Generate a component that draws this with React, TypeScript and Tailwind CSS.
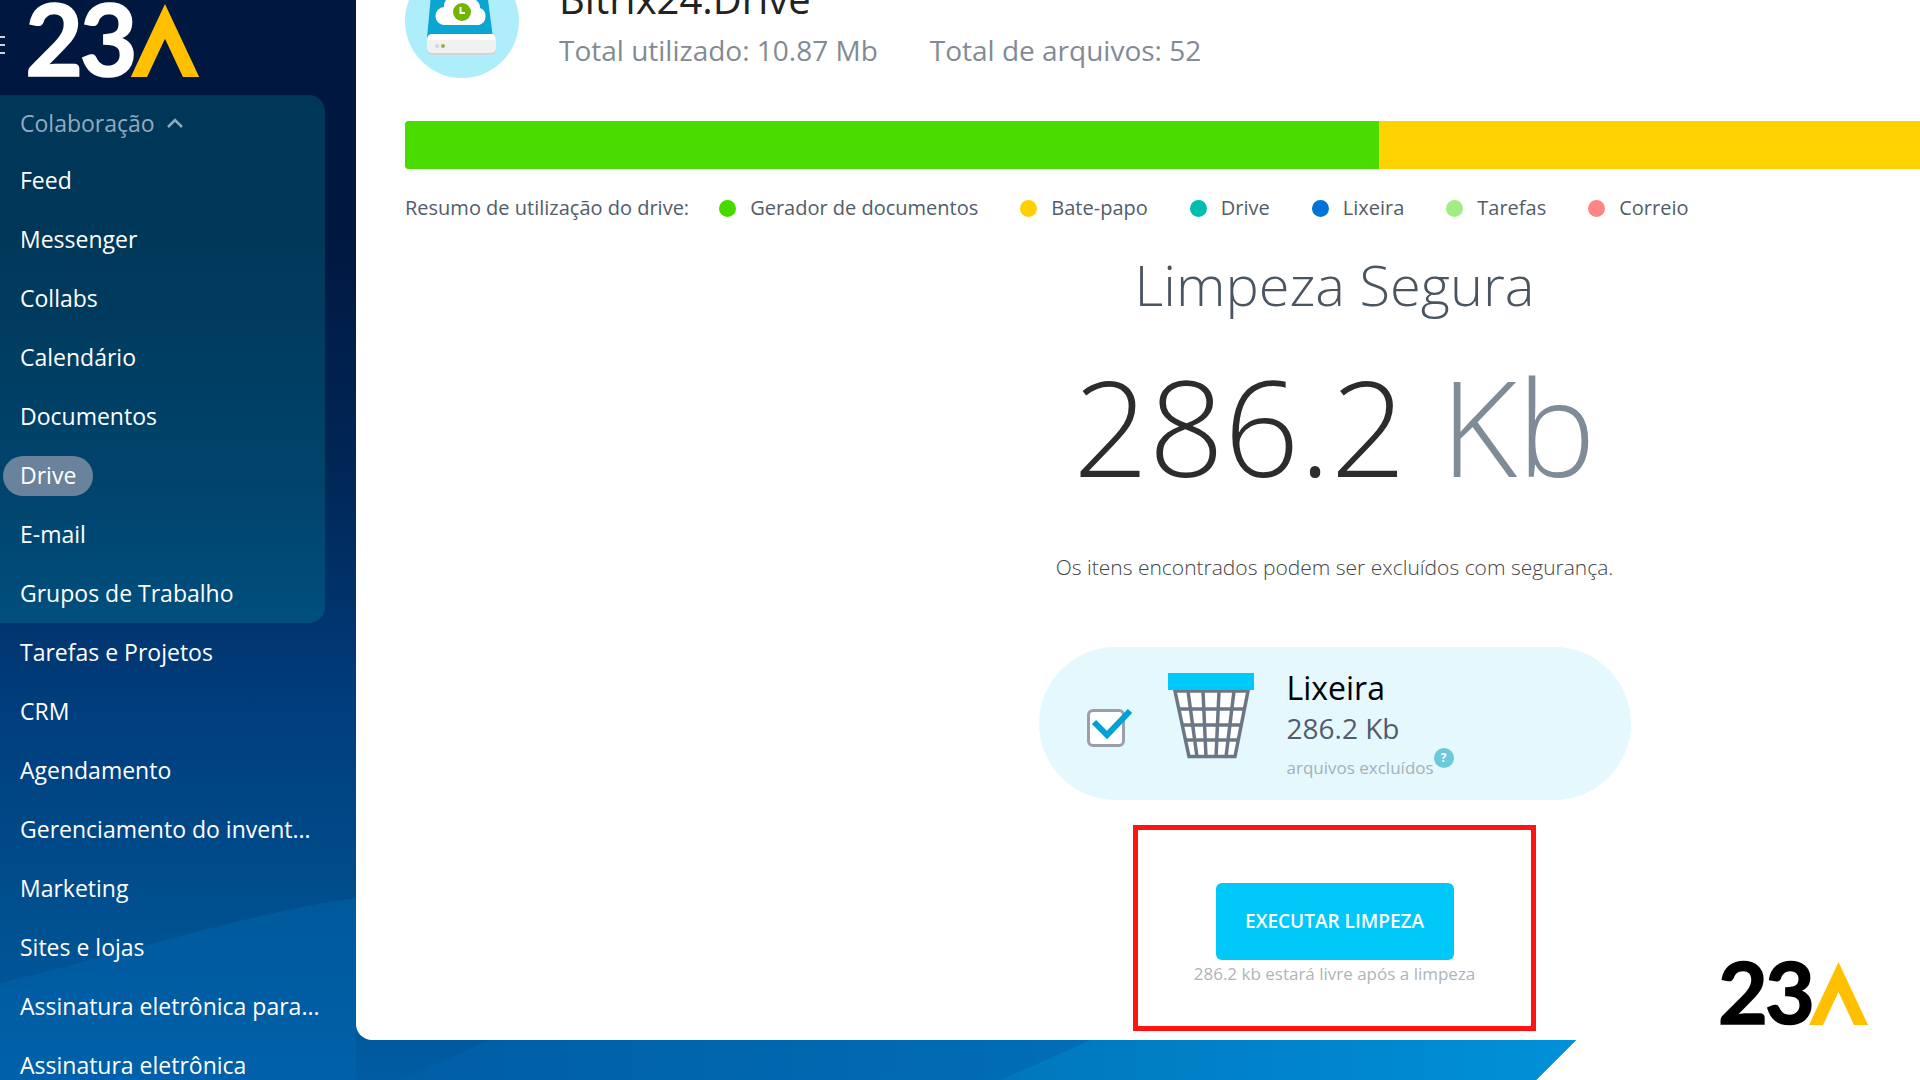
const collaboration = ["Feed", "Messenger", "Collabs", "Calendário", "Documentos", "Drive", "E-mail", "Grupos de Trabalho"];

const tools = [
  "Tarefas e Projetos",
  "CRM",
  "Agendamento",
  "Gerenciamento do invent...",
  "Marketing",
  "Sites e lojas",
  "Assinatura eletrônica para...",
  "Assinatura eletrônica",
];

const legend = [
  { label: "Gerador de documentos", color: "bg-[#47d900]" },
  { label: "Bate-papo", color: "bg-[#ffd000]" },
  { label: "Drive", color: "bg-[#00bdb3]" },
  { label: "Lixeira", color: "bg-[#0073d6]" },
  { label: "Tarefas", color: "bg-[#a3ee83]" },
  { label: "Correio", color: "bg-[#ff8484]" },
];

function Logo({ className }: { className: string }) {
  return (
    <svg viewBox="0 0 147 63" className={`overflow-visible ${className}`} role="img" aria-label="23A">
      <text
        x="-3 44"
        y="62"
        fontSize="86"
        fontWeight="700"
        fontFamily="Lato, sans-serif"
        fill="currentColor"
        stroke="currentColor"
        strokeWidth="1.5"
      >
        23
      </text>
      <path d="M117.500 0L147 63H133L117.500 30L102 63H88Z" fill="#ffc000" />
    </svg>
  );
}

function DriveIcon() {
  return (
    <svg viewBox="0 0 114 114" className="size-[114px] shrink-0" aria-hidden="true">
      <circle cx="57" cy="57" r="57" fill="#aeeefb" />
      <path d="M27 20H81L88 74H22Z" fill="#0aa5d1" />
      <path d="M40 61a9 9 0 0 1-1-18a9 9 0 0 1 8-10a14 14 0 0 1 24 3a10 10 0 0 1 4 8a9 9 0 0 1-1 17Z" fill="#fff" />
      <circle cx="57" cy="48" r="9" fill="#72b500" />
      <path d="M55.500 43V49H60" fill="none" stroke="#fff" strokeWidth="2" />
      <rect x="22" y="72" width="69" height="19" rx="5" fill="#cfd5da" />
      <rect x="22" y="70" width="69" height="19" rx="5" fill="#f1f1f2" />
      <path d="M27 70H86a5 5 0 0 1 4 6H23a5 5 0 0 1 4-6Z" fill="#fff" />
      <circle cx="32" cy="82" r="2" fill="#d8d4d4" />
      <circle cx="38" cy="82" r="2" fill="#8fb34f" />
    </svg>
  );
}

function BasketIcon() {
  return (
    <svg viewBox="0 0 86 86" className="size-[86px] shrink-0" aria-hidden="true">
      <path d="M7 18H80L68 84H20Z" fill="#fff" />
      <g fill="none" stroke="#6b7785" strokeWidth="3.500">
        <path d="M7 18H80L67 83.500H21Z" />
        <path d="M20 18L29 84M35 18L38 84M51 18L48 84M66 18L58 84M10 36H77M13 52H74M16 67H71" />
      </g>
      <path d="M0 0H86V17H0Z" fill="#00c8f8" />
    </svg>
  );
}

function Sidebar() {
  return (
    <aside className="w-[356px] shrink-0 text-[23px] text-white">
      <div className="flex h-[95px] items-start gap-[23px] pt-1">
        <button aria-label="Menu" className="mt-8 flex w-[5px] flex-col gap-1.5">
          <span className="h-0.5 bg-white/80" />
          <span className="h-0.5 bg-white/80" />
          <span className="h-0.5 bg-white/80" />
        </button>
        <Logo className="h-[73px] w-[172px]" />
      </div>
      <nav>
        <div className="mr-[31px] rounded-r-2xl bg-[#00b5ba]/20">
          <button className="flex h-14 items-center gap-3 px-5 text-[#93a9c0]">
            Colaboração
            <svg viewBox="0 0 16 10" className="h-2.5 w-4" aria-hidden="true">
              <path d="M1 9L8 2L15 9" fill="none" stroke="currentColor" strokeWidth="2.500" />
            </svg>
          </button>
          <ul>
            {collaboration.map((item) => (
              <li key={item} className="flex h-[59px] items-center pl-[3px]">
                <a
                  href="#"
                  aria-current={item === "Drive" ? "page" : undefined}
                  className="flex h-10 items-center rounded-full px-[17px] aria-[current=page]:bg-[#6a829c]"
                >
                  {item}
                </a>
              </li>
            ))}
          </ul>
        </div>
        <ul>
          {tools.map((item) => (
            <li key={item} className="flex h-[59px] items-center px-5">
              <a href="#" className="whitespace-nowrap">{item}</a>
            </li>
          ))}
        </ul>
      </nav>
    </aside>
  );
}

function Cleanup() {
  return (
    <section className="flex flex-col items-center">
      <h2 className="mt-6 text-[56px] leading-[76px] font-light text-[#4a5560]">Limpeza Segura</h2>
      <p className="mt-3 text-[132px] leading-[184px] font-light whitespace-nowrap text-[#2c2c2c]">
        286.2 <span className="text-[#7f8b97]">Kb</span>
      </p>
      <p className="mt-[33px] text-[21px] leading-8 font-light text-[#444]">
        Os itens encontrados podem ser excluídos com segurança.
      </p>
      <label className="mt-16 flex h-[153px] w-[592px] items-center rounded-full bg-[#e5f8fe] pl-12">
        <span className="relative mt-2 size-[38px] shrink-0">
          <input
            type="checkbox"
            defaultChecked
            className="peer size-[38px] appearance-none rounded-md border-[3px] border-[#9a9fab] bg-white"
          />
          <svg viewBox="0 0 42 32" className="absolute top-0 left-1 hidden h-8 w-[42px] peer-checked:block" aria-hidden="true">
            <path d="M3 13L16 26L39 2" fill="none" stroke="#00a2d6" strokeWidth="6" />
          </svg>
        </span>
        <span className="mr-[33px] ml-[43px] -mt-4">
          <BasketIcon />
        </span>
        <span className="mt-2 flex flex-col">
          <span className="text-[32px] leading-10 text-black">Lixeira</span>
          <span className="text-[28px] leading-10 text-[#525c69]">286.2 Kb</span>
          <span className="flex text-[17px] leading-10 text-[#a3b1ba]">
            arquivos excluídos
            <span className="flex size-5 items-center justify-center rounded-full bg-[#6cc9dc] text-xs font-bold text-white">?</span>
          </span>
        </span>
      </label>
      <div className="mt-[25px] flex h-[206px] w-[403px] flex-col items-center border-[5px] border-[#ff1414] pt-[53px]">
        <button className="h-[77px] w-[238px] rounded-md bg-[#00c8f8] text-[19px] font-semibold text-white">
          EXECUTAR LIMPEZA
        </button>
        <p className="text-[17px] leading-7 text-[#b0b4b8]">286.2 kb estará livre após a limpeza</p>
      </div>
    </section>
  );
}

function DriveUsage() {
  return (
    <div className="w-[122%] pl-[49px]">
      <header className="-mt-9 flex gap-10">
        <DriveIcon />
        <div>
          <h1 className="text-[40px] leading-[70px] text-[#222]">Bitrix24.Drive</h1>
          <p className="flex gap-13 text-[28px] leading-8 text-[#828b95]">
            <span>Total utilizado: 10.87 Mb</span>
            <span>Total de arquivos: 52</span>
          </p>
        </div>
      </header>
      <div className="mt-[43px] flex h-12 overflow-hidden rounded-sm bg-[#ffd302]">
        <div className="w-[52.4%] bg-[#4adb00]" />
      </div>
      <div className="mt-[25px] flex items-center text-xl leading-7 whitespace-nowrap text-[#525c69]">
        <span className="mr-[30px]">Resumo de utilização do drive:</span>
        <ul className="flex gap-[42px]">
          {legend.map((item) => (
            <li key={item.label} className="flex items-center gap-3.5">
              <span className={`size-[17px] rounded-full ${item.color}`} />
              {item.label}
            </li>
          ))}
        </ul>
      </div>
      <Cleanup />
    </div>
  );
}

export default function App() {
  return (
    <div className="relative flex h-screen overflow-hidden bg-white font-['Open_Sans',sans-serif]">
      <svg viewBox="0 0 1920 1080" preserveAspectRatio="none" className="absolute inset-0 h-full w-full" aria-hidden="true">
        <defs>
          <linearGradient id="night" x1="0" y1="0" x2="0" y2="1">
            <stop offset="0" stopColor="#001840" />
            <stop offset="0.2" stopColor="#00173f" />
            <stop offset="0.45" stopColor="#002859" />
            <stop offset="0.65" stopColor="#003d7c" />
            <stop offset="0.85" stopColor="#00508f" />
            <stop offset="1" stopColor="#005ca3" />
          </linearGradient>
          <linearGradient id="day" x1="0" y1="0" x2="1" y2="0">
            <stop offset="0" stopColor="#005ea5" />
            <stop offset="1" stopColor="#006eb7" />
          </linearGradient>
          <linearGradient id="dawn" x1="0" y1="0" x2="1" y2="0">
            <stop offset="0" stopColor="#0077bd" />
            <stop offset="1" stopColor="#0091d8" />
          </linearGradient>
        </defs>
        <path d="M0 0H1576V1040L1536 1080H0Z" fill="url(#night)" />
        <path d="M0 983C120 955 250 912 356 898V1080H0Z" fill="#0068b5" fillOpacity="0.4" />
        <path d="M490 1040H1090L1000 1080H400Z" fill="url(#day)" />
        <path d="M1090 1040H1576L1536 1080H1000Z" fill="url(#dawn)" />
      </svg>
      <div className="relative flex min-w-0 grow">
        <Sidebar />
        <main className="mb-10 min-w-0 grow overflow-hidden rounded-bl-2xl bg-white">
          <DriveUsage />
        </main>
      </div>
      <Logo className="absolute right-[52px] bottom-[55px] h-[63px] w-[147px] text-black" />
    </div>
  );
}
